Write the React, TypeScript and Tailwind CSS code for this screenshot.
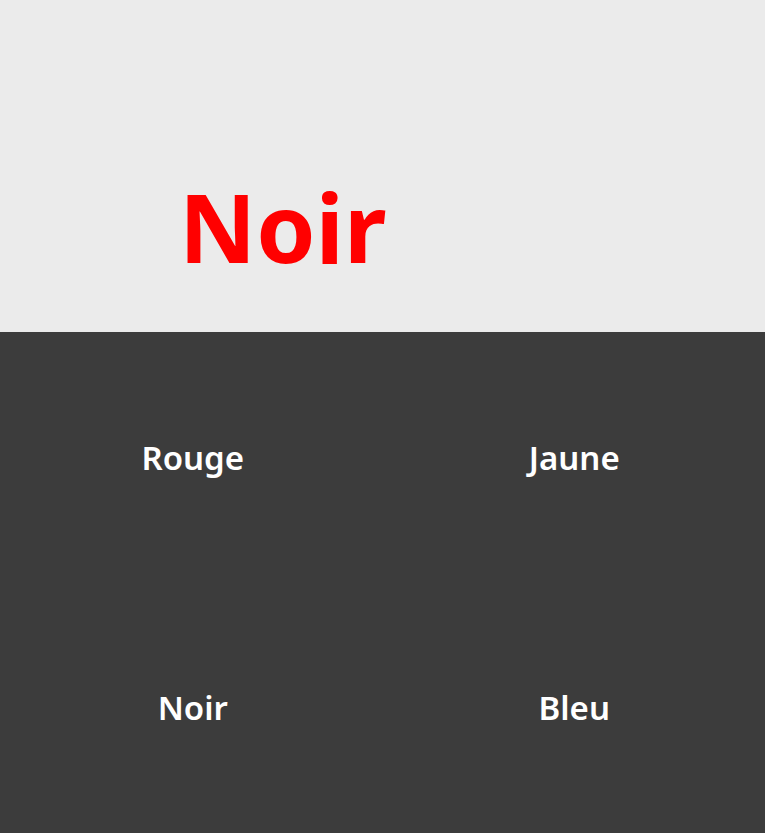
const cells = ["Rouge", "Jaune", "Noir", "Bleu"];

export default function App() {
  return (
    <div className="w-[765px] h-[833px] flex flex-col font-['Noto_Sans',sans-serif]">
      <div className="h-[332px] bg-[#ebebeb] flex items-end pb-[58px] pl-[179px]">
        <span className="text-[95px] leading-none font-bold text-[#ff0000]">Noir</span>
      </div>
      <div className="flex-1 bg-[#3c3c3c] grid grid-cols-2 grid-rows-2 pl-[2px]">
        {cells.map((c) => (
          <div key={c} className="flex items-center justify-center text-white text-[33px] font-semibold">
            {c}
          </div>
        ))}
      </div>
    </div>
  );
}
